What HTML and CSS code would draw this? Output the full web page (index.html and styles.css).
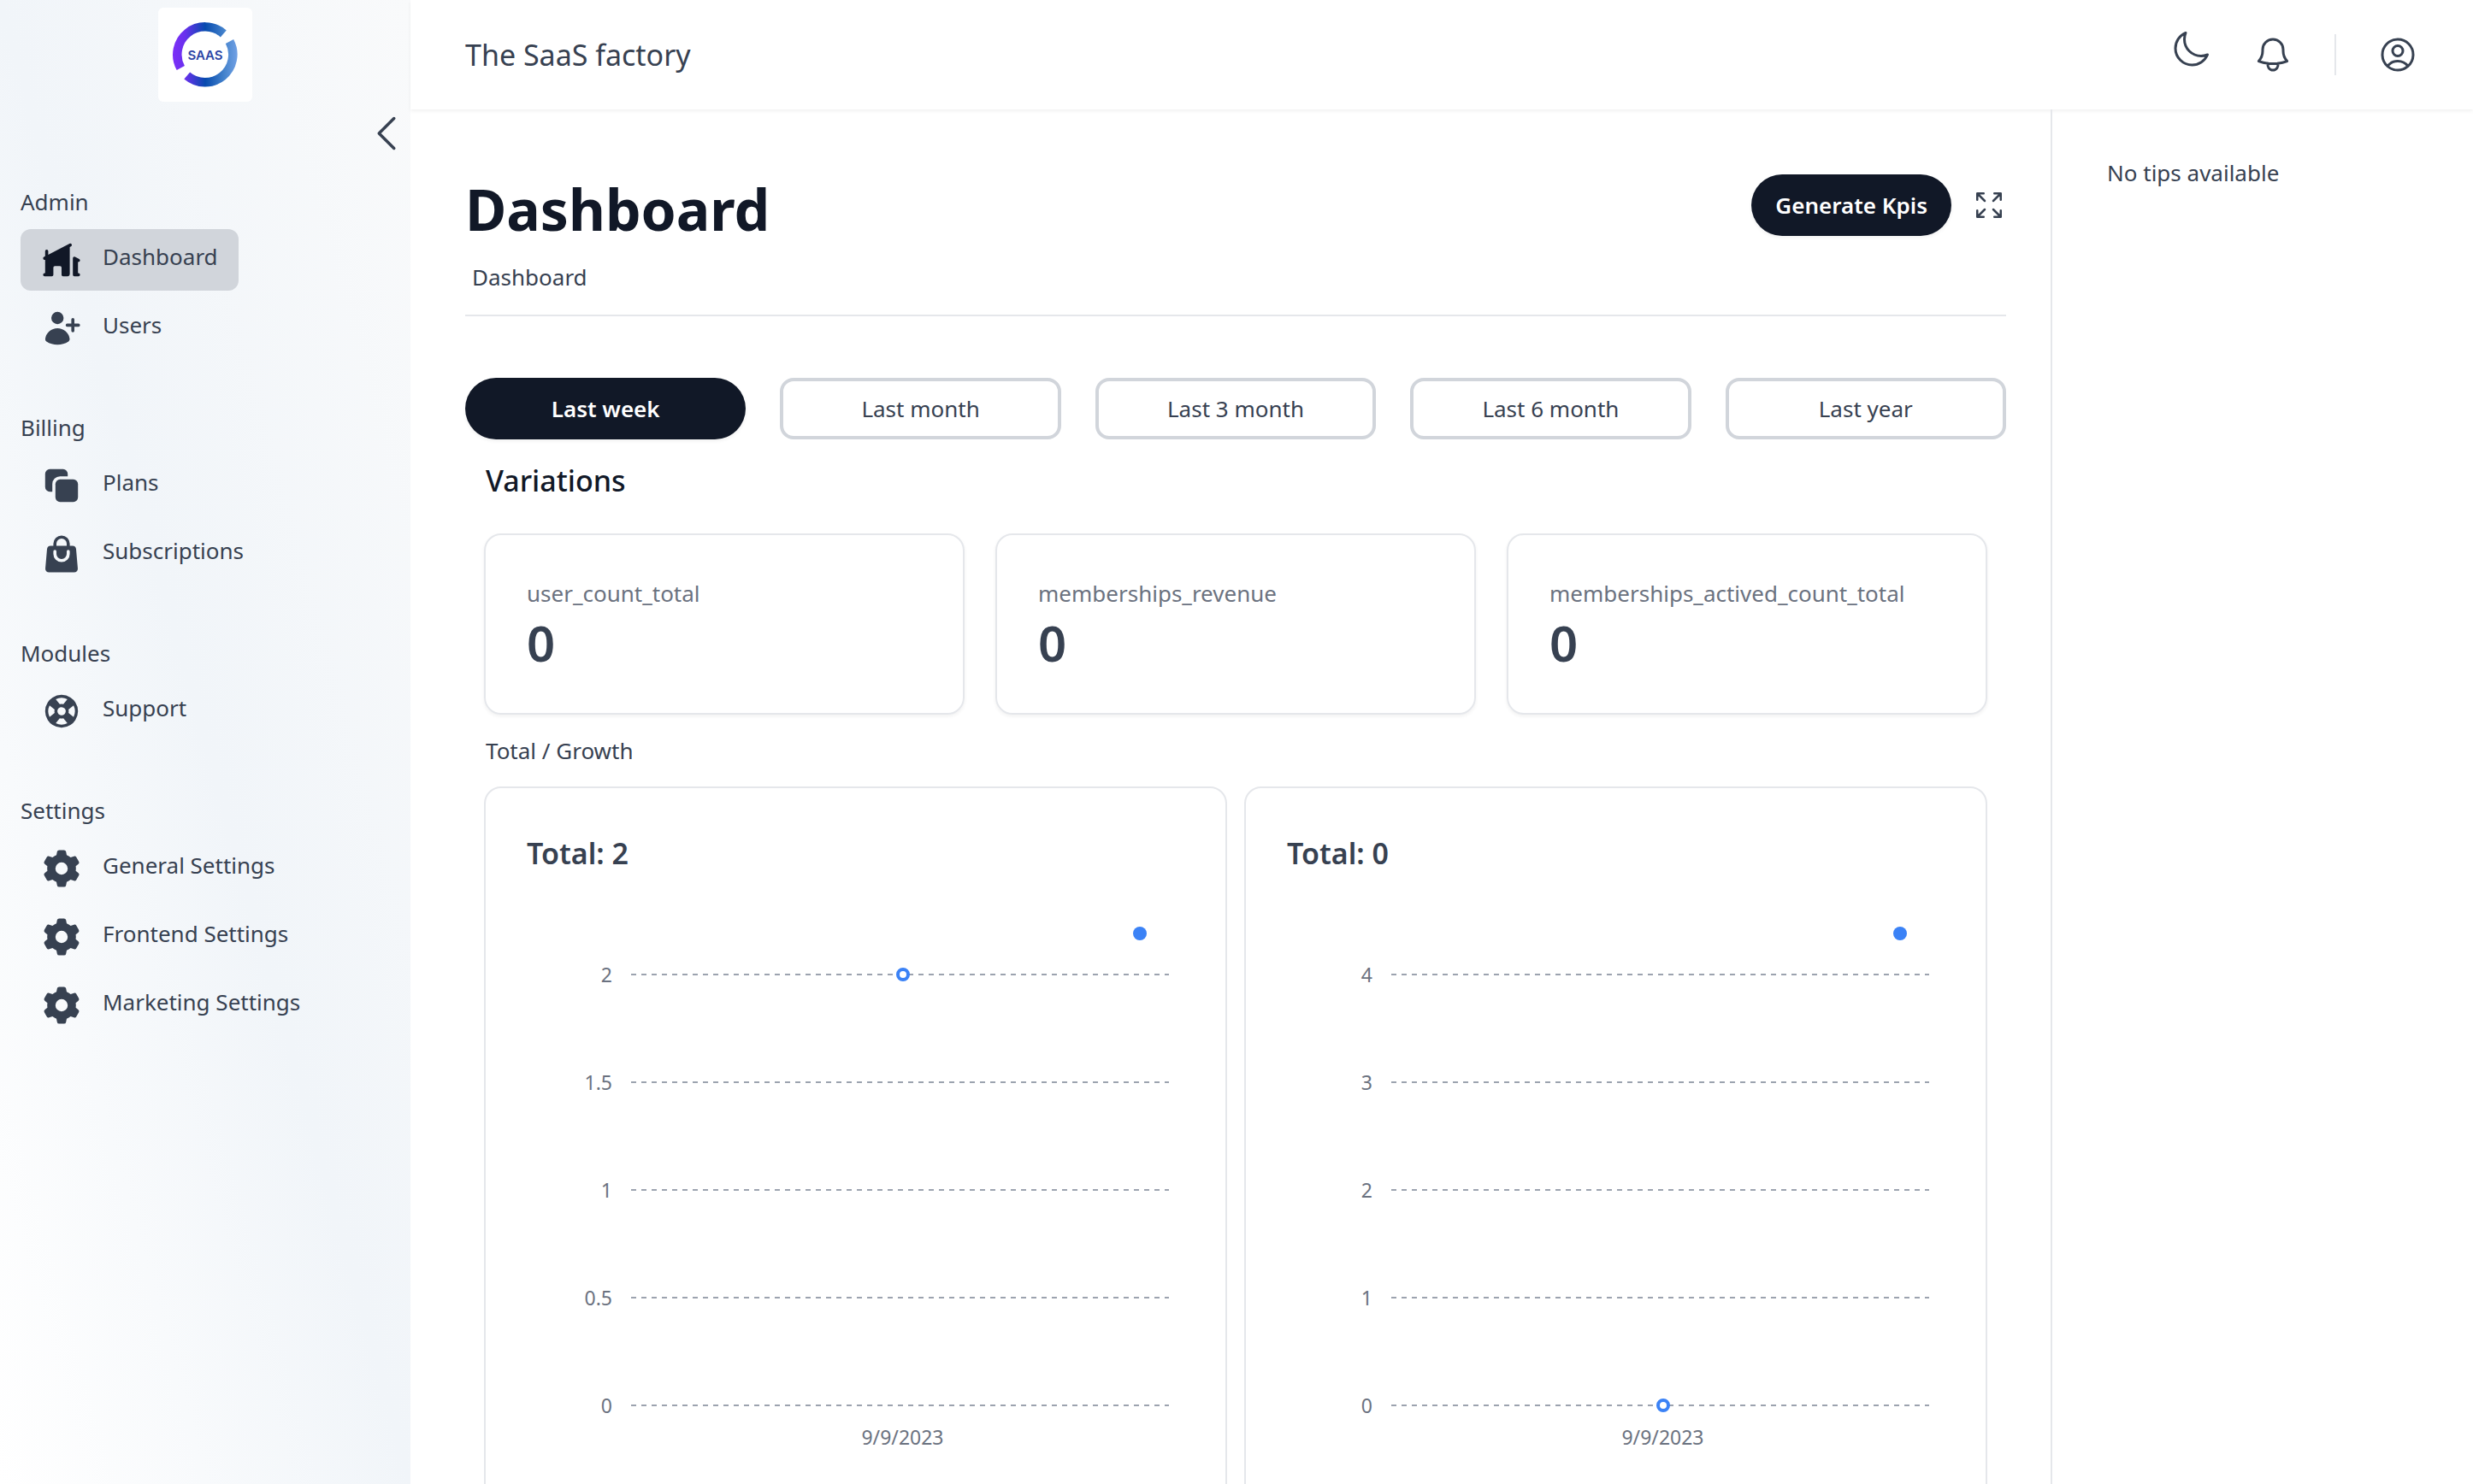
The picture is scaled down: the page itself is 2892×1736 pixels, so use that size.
FILE: index.html
```html
<!DOCTYPE html>
<html lang="en">
<head>
<meta charset="utf-8">
<meta name="viewport" content="width=device-width, initial-scale=1">
<title>Dashboard - The SaaS factory</title>
<link rel="stylesheet" href="styles.css">
</head>
<body>
<svg class="sprite" aria-hidden="true">
  <symbol id="cog" viewBox="0 0 20 20"><path fill-rule="evenodd" d="M7.84 1.804A1 1 0 018.82 1h2.36a1 1 0 01.98.804l.331 1.652a6.993 6.993 0 011.929 1.115l1.598-.54a1 1 0 011.186.447l1.18 2.044a1 1 0 01-.205 1.251l-1.267 1.113a7.047 7.047 0 010 2.228l1.267 1.113a1 1 0 01.206 1.25l-1.18 2.045a1 1 0 01-1.187.447l-1.598-.54a6.993 6.993 0 01-1.929 1.115l-.33 1.652a1 1 0 01-.98.804H8.82a1 1 0 01-.98-.804l-.331-1.652a6.993 6.993 0 01-1.929-1.115l-1.598.54a1 1 0 01-1.186-.447l-1.18-2.044a1 1 0 01.205-1.251l1.267-1.114a7.05 7.05 0 010-2.227L1.821 7.773a1 1 0 01-.206-1.25l1.18-2.045a1 1 0 011.187-.447l1.598.54A6.993 6.993 0 017.51 3.456l.33-1.652zM10 13a3 3 0 100-6 3 3 0 000 6z"/></symbol>
</svg>
<div class="app">
  <aside class="sidebar">
    <a class="logo" href="#" aria-label="Home">
      <svg viewBox="0 0 110 110">
        <defs>
          <linearGradient id="ring" gradientUnits="userSpaceOnUse" x1="18" y1="0" x2="92" y2="0">
            <stop offset="0" stop-color="#7b2ff7"/><stop offset=".18" stop-color="#6a30ee"/><stop offset=".5" stop-color="#064aae"/><stop offset=".8" stop-color="#4583cc"/><stop offset="1" stop-color="#70a0e4"/>
          </linearGradient>
        </defs>
        <g fill="none" stroke="url(#ring)" stroke-width="10.500">
          <path d="M26.300 70.500A32.500 32.500 0 0 1 76.300 30.500"/>
          <path d="M83.500 39.500A32.500 32.500 0 0 1 33.700 79.500"/>
        </g>
        <text x="55" y="61" text-anchor="middle">SAAS</text>
      </svg>
    </a>
    <button class="collapse" aria-label="Collapse sidebar"><svg class="line-icon" viewBox="0 0 24 24"><path d="M15.750 19.500L8.250 12l7.500-7.500"/></svg></button>
    <nav class="nav">
      <section>
        <h2>Admin</h2>
        <a class="item active" href="#"><svg viewBox="0 0 20 20"><path d="M14.916 2.404a.75.75 0 01-.32 1.011l-.596.31V17a1 1 0 01-1 1h-2.260a.75.75 0 01-.75-.75v-3.500a.75.75 0 00-.75-.75H6.750a.75.75 0 00-.75.75v3.500a.75.75 0 01-.75.75h-3.500a.75.75 0 010-1.500H2V9.957a.75.75 0 01-.596-1.372L2 8.275V5.750a.75.75 0 011.500 0v1.745l10.404-5.410a.75.75 0 011.012.319zM15.861 8.570a.75.75 0 01.736-.025l1.999 1.040A.75.75 0 0118 10.957V16.500h.25a.75.75 0 110 1.500h-2a.75.75 0 01-.75-.75V9.210a.75.75 0 01.361-.64z"/></svg><span>Dashboard</span></a>
        <a class="item" href="#"><svg viewBox="0 0 20 20"><path d="M11 5a3 3 0 11-6 0 3 3 0 016 0zM2.615 16.428a1.224 1.224 0 01-.569-1.175 6.002 6.002 0 0111.908 0c.058.467-.172.92-.57 1.174A9.953 9.953 0 018 18a9.953 9.953 0 01-5.385-1.572zM16.250 5.750a.75.75 0 00-1.500 0v2h-2a.75.75 0 000 1.500h2v2a.75.75 0 001.500 0v-2h2a.75.75 0 000-1.500h-2v-2z"/></svg><span>Users</span></a>
      </section>
      <section>
        <h2>Billing</h2>
        <a class="item" href="#"><svg viewBox="0 0 20 20"><path d="M2 4.250A2.250 2.250 0 014.250 2h6.500A2.250 2.250 0 0113 4.250V5.500H9.250A3.750 3.750 0 005.500 9.250V13H4.250A2.250 2.250 0 012 10.750v-6.500z"/><path d="M9.250 7A2.250 2.250 0 007 9.250v6.500A2.250 2.250 0 009.250 18h6.500A2.250 2.250 0 0018 15.750v-6.500A2.250 2.250 0 0015.750 7h-6.500z"/></svg><span>Plans</span></a>
        <a class="item" href="#"><svg viewBox="0 0 20 20"><path fill-rule="evenodd" d="M6 5v1H4.667a1.750 1.750 0 00-1.743 1.598l-.826 9.500A1.750 1.750 0 003.840 19H16.160a1.750 1.750 0 001.743-1.902l-.826-9.500A1.750 1.750 0 0015.333 6H14V5a4 4 0 00-8 0zm4-2.500A2.500 2.500 0 007.500 5v1h5V5A2.500 2.500 0 0010 2.500zM7.500 10a2.500 2.500 0 005 0V8.750a.75.75 0 011.500 0V10a4 4 0 01-8 0V8.750a.75.75 0 011.500 0V10z"/></svg><span>Subscriptions</span></a>
      </section>
      <section>
        <h2>Modules</h2>
        <a class="item" href="#"><svg viewBox="0 0 20 20"><path fill-rule="evenodd" d="M7.171 4.146l1.947 2.466a3.514 3.514 0 011.764 0l1.947-2.466a6.520 6.520 0 00-5.658 0zm8.683 3.025l-2.466 1.947c.15.578.15 1.186 0 1.764l2.466 1.947a6.520 6.520 0 000-5.658zm-3.025 8.683l-1.947-2.466c-.578.15-1.186.15-1.764 0l-1.947 2.466a6.520 6.520 0 005.658 0zM4.146 12.830l2.466-1.947a3.514 3.514 0 010-1.764L4.146 7.171a6.520 6.520 0 000 5.658zM5.630 3.297a8.010 8.010 0 018.738 0 8.031 8.031 0 012.334 2.334 8.010 8.010 0 010 8.738 8.033 8.033 0 01-2.334 2.334 8.010 8.010 0 01-8.738 0 8.033 8.033 0 01-2.334-2.334 8.010 8.010 0 010-8.738A8.030 8.030 0 015.630 3.297zm5.198 4.882a2.008 2.008 0 00-2.243.407 1.994 1.994 0 00-.407 2.243 1.993 1.993 0 00.992.992 2.008 2.008 0 002.243-.407c.176-.175.31-.374.407-.585a2.008 2.008 0 00-.407-2.243 1.993 1.993 0 00-.585-.407z"/></svg><span>Support</span></a>
      </section>
      <section>
        <h2>Settings</h2>
        <a class="item" href="#"><svg><use href="#cog"/></svg><span>General Settings</span></a>
        <a class="item" href="#"><svg><use href="#cog"/></svg><span>Frontend Settings</span></a>
        <a class="item" href="#"><svg><use href="#cog"/></svg><span>Marketing Settings</span></a>
      </section>
    </nav>
  </aside>

  <div class="page">
    <header class="topbar">
      <p class="brand">The SaaS factory</p>
      <div class="tools">
        <button class="icon-button raised" aria-label="Dark mode"><svg class="line-icon" viewBox="0 0 24 24"><path d="M21.752 15.002A9.718 9.718 0 0118 15.750c-5.385 0-9.750-4.365-9.750-9.750 0-1.330.266-2.597.748-3.752A9.753 9.753 0 003 11.250C3 16.635 7.365 21 12.750 21a9.753 9.753 0 009.002-5.998z"/></svg></button>
        <button class="icon-button" aria-label="Notifications"><svg class="line-icon" viewBox="0 0 24 24"><path d="M14.857 17.082a23.848 23.848 0 005.454-1.310A8.967 8.967 0 0118 9.750v-.7V9A6 6 0 006 9v.75a8.967 8.967 0 01-2.312 6.022c1.733.64 3.560 1.085 5.455 1.310m5.714 0a24.255 24.255 0 01-5.714 0m5.714 0a3 3 0 11-5.714 0"/></svg></button>
        <span class="divider"></span>
        <button class="icon-button" aria-label="Account"><svg class="line-icon" viewBox="0 0 24 24"><path d="M17.982 18.725A7.488 7.488 0 0012 15.750a7.488 7.488 0 00-5.982 2.975m11.963 0a9 9 0 10-11.963 0m11.963 0A8.966 8.966 0 0112 21a8.966 8.966 0 01-5.982-2.275M15 9.750a3 3 0 11-6 0 3 3 0 016 0z"/></svg></button>
      </div>
    </header>

    <div class="body">
      <main class="main">
        <div class="heading">
          <h1>Dashboard</h1>
          <div class="actions">
            <button class="pill">Generate Kpis</button>
            <button class="expand" aria-label="Full screen"><svg class="line-icon" viewBox="0 0 24 24"><path d="M3.750 3.750v4.500m0-4.500h4.500m-4.500 0L9 9M3.750 20.250v-4.500m0 4.500h4.500m-4.500 0L9 15M20.250 3.750h-4.500m4.500 0v4.500m0-4.500L15 9m5.250 11.250h-4.500m4.500 0v-4.500m0 4.500L15 15"/></svg></button>
          </div>
        </div>
        <nav class="crumbs" aria-label="Breadcrumb"><a href="#">Dashboard</a></nav>

        <div class="ranges">
          <button class="pill">Last week</button>
          <button class="range">Last month</button>
          <button class="range">Last 3 month</button>
          <button class="range">Last 6 month</button>
          <button class="range">Last year</button>
        </div>

        <div class="stats">
          <h2 class="variations">Variations</h2>
          <div class="cards">
            <div class="card"><p>user_count_total</p><strong>0</strong></div>
            <div class="card"><p>memberships_revenue</p><strong>0</strong></div>
            <div class="card"><p>memberships_actived_count_total</p><strong>0</strong></div>
          </div>
          <p class="growth">Total / Growth</p>
          <div class="charts">
            <section class="chart">
              <h3>Total: 2</h3>
              <div class="legend"><i class="dot"></i></div>
              <div class="tick"><span>2</span><div class="rule"><i class="dot hollow"></i></div></div>
              <div class="tick"><span>1.5</span><div class="rule"></div></div>
              <div class="tick"><span>1</span><div class="rule"></div></div>
              <div class="tick"><span>0.5</span><div class="rule"></div></div>
              <div class="tick"><span>0</span><div class="rule"></div></div>
              <p class="date">9/9/2023</p>
            </section>
            <section class="chart">
              <h3>Total: 0</h3>
              <div class="legend"><i class="dot"></i></div>
              <div class="tick"><span>4</span><div class="rule"></div></div>
              <div class="tick"><span>3</span><div class="rule"></div></div>
              <div class="tick"><span>2</span><div class="rule"></div></div>
              <div class="tick"><span>1</span><div class="rule"></div></div>
              <div class="tick"><span>0</span><div class="rule"><i class="dot hollow"></i></div></div>
              <p class="date">9/9/2023</p>
            </section>
          </div>
        </div>
      </main>
      <aside class="tips">No tips available</aside>
    </div>
  </div>
</div>
</body>
</html>
```
FILE: styles.css
```css
* { box-sizing: border-box; margin: 0; padding: 0; }

body {
  font-family: "Noto Sans", "Open Sans", sans-serif;
  font-size: 26px;
  line-height: 40px;
  color: #374151;
  background: #fff;
}

a { color: inherit; text-decoration: none; }
button { font: inherit; color: inherit; background: none; border: 0; cursor: pointer; }
svg { display: block; fill: currentColor; }
.sprite { display: none; }
.line-icon { width: 48px; height: 48px; fill: none; stroke: currentColor; stroke-width: 1.5; stroke-linecap: round; stroke-linejoin: round; }

.app { display: flex; height: 100vh; overflow: hidden; }

/* Sidebar */
.sidebar {
  flex: 0 0 480px;
  display: flex;
  flex-direction: column;
  padding-top: 9px;
  background: linear-gradient(to top right, #fff, #f1f5f9, #f9fafb);
}
.logo { align-self: center; width: 110px; height: 110px; border-radius: 6px; background: #fff; }
.logo text { font: 600 15px Inter, sans-serif; fill: #2c45a5; }
.collapse { align-self: flex-end; margin-top: 9px; }
.collapse .line-icon { width: 56px; height: 56px; }
.nav { display: flex; flex-direction: column; gap: 60px; padding: 32px 24px; }
.nav section { display: flex; flex-direction: column; align-items: flex-start; gap: 8px; }
.nav h2 { font-size: 26px; font-weight: 400; margin-bottom: 4px; }
.item { display: flex; gap: 24px; padding: 12px 24px; border-radius: 12px; }
.item svg { width: 48px; height: 48px; }
.active { background: #d1d5db; }
.active svg { color: #111827; }

/* Top bar */
.page { flex: 1; min-width: 0; display: flex; flex-direction: column; }
.topbar {
  flex: 0 0 128px;
  display: flex;
  align-items: center;
  justify-content: space-between;
  padding: 0 64px;
  box-shadow: 0 2px 4px rgba(0, 0, 0, .06);
}
.brand { font-size: 34px; }
.tools { display: flex; align-items: center; gap: 48px; }
.raised { padding-bottom: 12px; }
.divider { width: 2px; height: 48px; background: #e5e7eb; }

/* Content */
.body { flex: 1; min-height: 0; display: flex; }
.main { flex: 1; min-width: 0; padding: 72px 52px 0 64px; overflow: hidden; }
.tips { flex: 0 0 494px; padding: 54px 64px; border-left: 2px solid #e5e7eb; }

.heading { display: flex; justify-content: space-between; }
h1 { font-size: 66px; line-height: 88px; font-weight: 700; color: #111827; }
.actions { display: flex; align-items: center; gap: 24px; height: 80px; }
.pill {
  height: 72px;
  padding: 0 28px;
  border-radius: 36px;
  font-weight: 600;
  color: #fff;
  background: #111827;
  box-shadow: 0 2px 4px rgba(0, 0, 0, .06);
}
.expand .line-icon { width: 40px; height: 40px; }
.crumbs { padding: 16px 8px 24px; border-bottom: 2px solid #e5e7eb; }

.ranges { display: grid; grid-template-columns: repeat(5, 1fr); gap: 40px; margin-top: 72px; }
.range { height: 72px; border: 4px solid #d1d5db; border-radius: 16px; }

.stats { padding: 28px 22px 0; }
.variations { padding: 0 2px; font-size: 34px; font-weight: 500; color: #111827; }
.cards { display: grid; grid-template-columns: repeat(3, 1fr); gap: 36px; margin-top: 42px; }
.card {
  padding: 48px 48px 46px;
  border: 2px solid #e5e7eb;
  border-radius: 20px;
  box-shadow: 0 2px 4px rgba(0, 0, 0, .06);
}
.card p { margin-bottom: 2px; color: #6b7280; }
.card strong { display: block; font-size: 58px; line-height: 72px; font-weight: 600; }
.growth { padding: 22px 2px; }

.charts { display: grid; grid-template-columns: repeat(2, 1fr); gap: 20px; }
.chart {
  padding: 48px 66px 96px 48px;
  border: 2px solid #e5e7eb;
  border-radius: 20px;
}
.chart h3 { font-size: 34px; line-height: 56px; font-weight: 600; }
/* The legend dips into the free upper half of the first tick row */
.legend { display: flex; justify-content: flex-end; padding: 58px 26px 0 0; margin-bottom: -23px; }
.dot { width: 16px; height: 16px; border-radius: 50%; background: #3b82f6; }
.hollow { border: 4px solid #3b82f6; background: #fff; }
.tick { display: flex; align-items: center; gap: 22px; height: 126px; font-size: 23px; color: #6b7280; }
.tick span { width: 100px; text-align: right; }
.rule {
  flex: 1;
  display: flex;
  align-items: center;
  justify-content: center;
  height: 16px;
  padding-left: 6px;
  background: repeating-linear-gradient(90deg, #9ca3af 0 6px, transparent 6px 12px) center / 100% 2px no-repeat;
}
.date { margin-top: -46px; padding-left: 128px; text-align: center; font-size: 23px; color: #6b7280; }
```
